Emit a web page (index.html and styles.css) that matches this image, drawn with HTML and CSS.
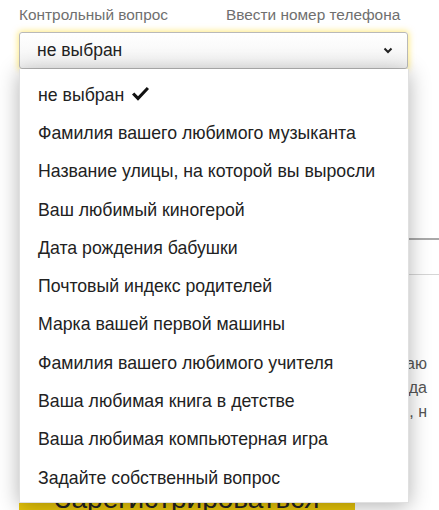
FILE: index.html
```html
<!DOCTYPE html>
<html lang="ru">
<head>
<meta charset="utf-8">
<link rel="stylesheet" href="styles.css">
</head>
<body>
<div class="page">
  <div class="labels">
    <span class="label">Контрольный вопрос</span>
    <span class="label label-right">Ввести номер телефона</span>
  </div>
  <div class="select-wrap">
    <div class="select">
      <span class="select-value">не выбран</span>
      <svg class="chevron" width="10" height="7" viewBox="0 0 10 7"><path d="M1.5 1.5 L5 5 L8.5 1.5" fill="none" stroke="#222" stroke-width="2"/></svg>
    </div>
    <ul class="dropdown">
      <li class="item">не выбран<svg class="check" width="17" height="14" viewBox="0 0 17 14"><polygon points="0,7.6 2.3,5.4 6,9.2 14.8,0 17,2.1 6,13.8" fill="#111"/></svg></li>
      <li class="item">Фамилия вашего любимого музыканта</li>
      <li class="item">Название улицы, на которой вы выросли</li>
      <li class="item">Ваш любимый киногерой</li>
      <li class="item">Дата рождения бабушки</li>
      <li class="item">Почтовый индекс родителей</li>
      <li class="item">Марка вашей первой машины</li>
      <li class="item">Фамилия вашего любимого учителя</li>
      <li class="item">Ваша любимая книга в детстве</li>
      <li class="item">Ваша любимая компьютерная игра</li>
      <li class="item">Задайте собственный вопрос</li>
    </ul>
  </div>
  <div class="field"></div>
  <div class="note">
    <div class="note-line">аю</div>
    <div class="note-line">да</div>
    <div class="note-line">, н</div>
  </div>
  <div class="button">Зарегистрироваться</div>
</div>
</body>
</html>
```
FILE: styles.css
```css
html, body {
  margin: 0;
  padding: 0;
  background: #fff;
  overflow: hidden;
}
body {
  font-family: "Liberation Sans", Arial, sans-serif;
  color: #222;
}
.page {
  padding-left: 19px;
  width: 420px;
  height: 510px;
  overflow: hidden;
}
.labels {
  display: flex;
  height: 32px;
  align-items: center;
  gap: 58px;
  padding-bottom: 2px;
  box-sizing: border-box;
}
.label {
  font-size: 15.4px;
  color: #6f6f6f;
  white-space: nowrap;
}
.select-wrap {
  position: relative;
  width: 389px;
}
.select {
  height: 37px;
  box-sizing: border-box;
  border: 1px solid #b9b9b9;
  border-radius: 3px;
  background: linear-gradient(#ffffff, #f3f3f3);
  box-shadow: 0 0 6px 1px rgba(255, 214, 0, 0.5);
  display: flex;
  align-items: center;
  padding: 0 14px 0 17px;
}
.select-value {
  font-size: 17.5px;
  color: #222;
}
.chevron {
  margin-left: auto;
}
.dropdown {
  position: absolute;
  top: 37px;
  left: 0;
  width: 388px;
  margin: 0;
  padding: 7px 0 5px;
  list-style: none;
  background: #fff;
  border: 1px solid rgba(0, 0, 0, 0.12);
  border-top: none;
  box-shadow: 0 3px 20px rgba(0, 0, 0, 0.3);
  z-index: 2;
}
.item {
  height: 38.3px;
  display: flex;
  align-items: center;
  padding-left: 18px;
  font-size: 17.7px;
  color: #222;
  white-space: nowrap;
}
.check {
  margin-left: 8px;
  margin-top: -2px;
}
.field {
  margin-top: 169px;
  height: 37px;
  box-sizing: border-box;
  border-top: 2px solid #a9a9a9;
  border-bottom: 1px solid #d6d6d6;
}
.note {
  margin-top: 77px;
  width: 408px;
  font-size: 16px;
  line-height: 24px;
  color: #555;
}
.note-line {
  white-space: nowrap;
  text-align: right;
}
.button {
  margin-top: 50px;
  width: 336px;
  height: 50px;
  background: #e8c60a;
  border-radius: 2px;
  display: flex;
  align-items: center;
  justify-content: center;
  font-size: 28px;
  color: #222;
  overflow: hidden;
}
```
